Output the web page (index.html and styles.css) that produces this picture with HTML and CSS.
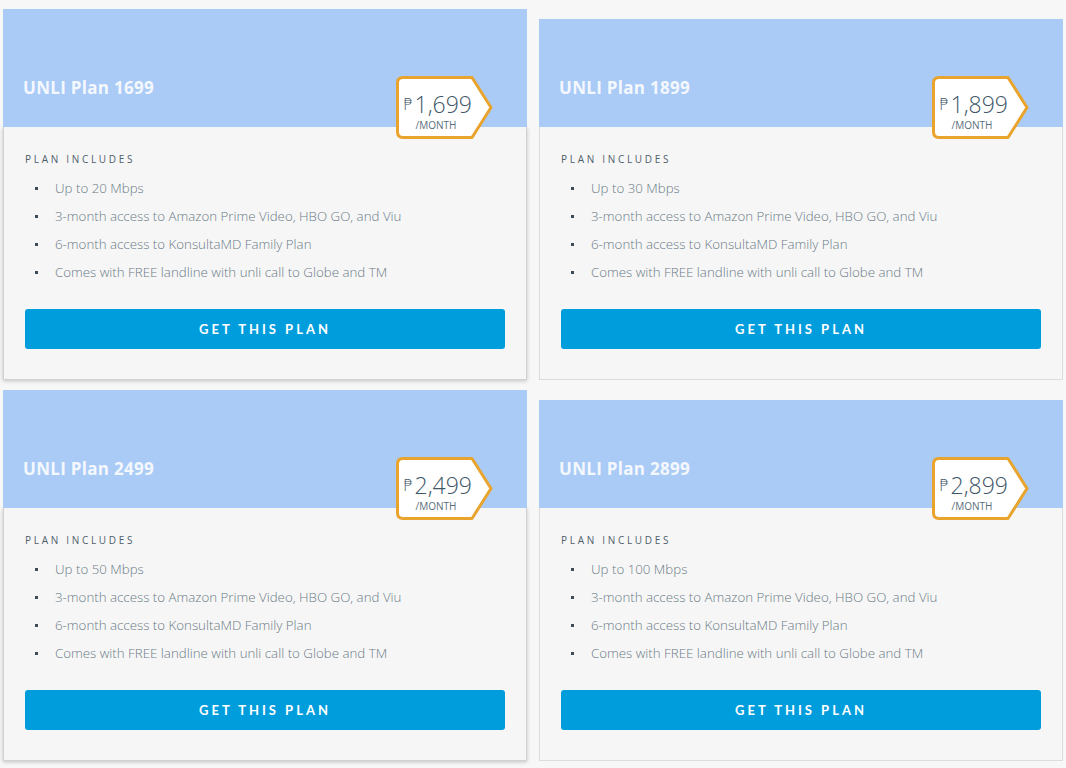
FILE: index.html
```html
<!DOCTYPE html>
<html lang="en">
<head>
  <meta charset="UTF-8">
  <title>UNLI Plans</title>
  <meta name="viewport" content="width=device-width, initial-scale=1.0">
  <link rel="stylesheet" href="styles.css">
</head>
<body>
  <main class="plans">
    <!-- Row 1 -->
    <div class="plan-row">
      <div class="plan-card raised">
        <div class="plan-head">
          <h3>UNLI Plan 1699</h3>
          <div class="price-tag">
            <svg class="tag-shape" viewBox="0 0 97 63" width="97" height="63"><path d="M7 1.5H76L95 31.5L76 61.5H7Q1.5 61.5 1.5 56V7Q1.5 1.5 7 1.5Z"/></svg>
            <div class="tag-text">
              <div class="amount"><span class="peso">₱</span>1,699</div>
              <div class="per">/MONTH</div>
            </div>
          </div>
        </div>
        <div class="plan-body">
          <p class="label">PLAN INCLUDES</p>
          <ul>
            <li>Up to 20 Mbps</li>
            <li>3-month access to Amazon Prime Video, HBO GO, and Viu</li>
            <li>6-month access to KonsultaMD Family Plan</li>
            <li>Comes with FREE landline with unli call to Globe and TM</li>
          </ul>
          <button class="btn">GET THIS PLAN</button>
        </div>
      </div>

      <div class="plan-card">
        <div class="plan-head">
          <h3>UNLI Plan 1899</h3>
          <div class="price-tag">
            <svg class="tag-shape" viewBox="0 0 97 63" width="97" height="63"><path d="M7 1.5H76L95 31.5L76 61.5H7Q1.5 61.5 1.5 56V7Q1.5 1.5 7 1.5Z"/></svg>
            <div class="tag-text">
              <div class="amount"><span class="peso">₱</span>1,899</div>
              <div class="per">/MONTH</div>
            </div>
          </div>
        </div>
        <div class="plan-body">
          <p class="label">PLAN INCLUDES</p>
          <ul>
            <li>Up to 30 Mbps</li>
            <li>3-month access to Amazon Prime Video, HBO GO, and Viu</li>
            <li>6-month access to KonsultaMD Family Plan</li>
            <li>Comes with FREE landline with unli call to Globe and TM</li>
          </ul>
          <button class="btn">GET THIS PLAN</button>
        </div>
      </div>
    </div>

    <!-- Row 2 -->
    <div class="plan-row">
      <div class="plan-card raised">
        <div class="plan-head">
          <h3>UNLI Plan 2499</h3>
          <div class="price-tag">
            <svg class="tag-shape" viewBox="0 0 97 63" width="97" height="63"><path d="M7 1.5H76L95 31.5L76 61.5H7Q1.5 61.5 1.5 56V7Q1.5 1.5 7 1.5Z"/></svg>
            <div class="tag-text">
              <div class="amount"><span class="peso">₱</span>2,499</div>
              <div class="per">/MONTH</div>
            </div>
          </div>
        </div>
        <div class="plan-body">
          <p class="label">PLAN INCLUDES</p>
          <ul>
            <li>Up to 50 Mbps</li>
            <li>3-month access to Amazon Prime Video, HBO GO, and Viu</li>
            <li>6-month access to KonsultaMD Family Plan</li>
            <li>Comes with FREE landline with unli call to Globe and TM</li>
          </ul>
          <button class="btn">GET THIS PLAN</button>
        </div>
      </div>

      <div class="plan-card">
        <div class="plan-head">
          <h3>UNLI Plan 2899</h3>
          <div class="price-tag">
            <svg class="tag-shape" viewBox="0 0 97 63" width="97" height="63"><path d="M7 1.5H76L95 31.5L76 61.5H7Q1.5 61.5 1.5 56V7Q1.5 1.5 7 1.5Z"/></svg>
            <div class="tag-text">
              <div class="amount"><span class="peso">₱</span>2,899</div>
              <div class="per">/MONTH</div>
            </div>
          </div>
        </div>
        <div class="plan-body">
          <p class="label">PLAN INCLUDES</p>
          <ul>
            <li>Up to 100 Mbps</li>
            <li>3-month access to Amazon Prime Video, HBO GO, and Viu</li>
            <li>6-month access to KonsultaMD Family Plan</li>
            <li>Comes with FREE landline with unli call to Globe and TM</li>
          </ul>
          <button class="btn">GET THIS PLAN</button>
        </div>
      </div>
    </div>
  </main>
</body>
</html>
```

FILE: styles.css
```css
/* Plan cards */
body {
  margin: 0;
  background: #f7f7f7;
  font-family: "Open Sans", Arial, sans-serif;
}
.plans {
  padding: 9px 3px 0 3px;
  width: 1060px;
}
.plan-row {
  display: flex;
  align-items: flex-end;
  gap: 12px;
  margin-bottom: 10px;
}
.plan-card {
  width: 524px;
  position: relative;
}
.plan-head {
  position: relative;
  height: 108px;
  background: #a9cbf6;
  display: flex;
  align-items: flex-end;
  padding: 0 20px 29px 20px;
  box-sizing: border-box;
}
.raised .plan-head {
  height: 118px;
}
.plan-head h3 {
  margin: 0;
  color: #f4f8fe;
  font-family: "Open Sans", sans-serif;
  font-weight: 700;
  font-size: 17px;
  letter-spacing: 0.3px;
  line-height: 20px;
}
.price-tag {
  position: absolute;
  right: 34px;
  bottom: -12px;
  width: 97px;
  height: 63px;
}
.tag-shape {
  position: absolute;
  left: 0;
  top: 0;
}
.tag-shape path {
  fill: #fff;
  stroke: #e9a42e;
  stroke-width: 3;
  stroke-linejoin: round;
}
.tag-text {
  position: relative;
  width: 80px;
  padding-top: 15px;
  text-align: center;
  color: #3e5667;
}
.amount {
  font-size: 23px;
  font-weight: 300;
  line-height: 26px;
  padding-left: 3px;
  white-space: nowrap;
}
.peso {
  font-family: "DejaVu Sans", sans-serif;
  font-size: 15px;
  vertical-align: 3px;
  margin-right: 2px;
}
.per {
  margin-top: 1px;
  font-size: 10px;
  line-height: 12px;
  color: #5a6e7b;
}
.plan-body {
  background: #f6f6f6;
  border: 1px solid #dcdcdc;
  border-top: 0;
  padding: 25px 21px 30px 21px;
}
.raised .plan-body {
  border-color: #d2d2d2;
  box-shadow: 0 1px 4px rgba(0,0,0,0.22);
}
.label {
  margin: 0;
  font-size: 10px;
  line-height: 14px;
  letter-spacing: 2.7px;
  color: #4f5f6a;
}
ul {
  list-style: none;
  margin: 8px 0 0 0;
  padding: 0;
}
li {
  position: relative;
  padding-left: 30px;
  font-size: 13.3px;
  font-weight: 300;
  line-height: 28px;
  color: #6b7b86;
}
li::before {
  content: "";
  position: absolute;
  left: 10px;
  top: 13px;
  width: 3px;
  height: 3px;
  background: #3d4d58;
}
.btn {
  display: block;
  width: 100%;
  height: 40px;
  margin-top: 23px;
  border: 0;
  border-radius: 3px;
  background: #009ddc;
  color: #fff;
  font-family: Lato, "Open Sans", sans-serif;
  font-weight: 700;
  font-size: 13px;
  letter-spacing: 3px;
  cursor: pointer;
}
```
